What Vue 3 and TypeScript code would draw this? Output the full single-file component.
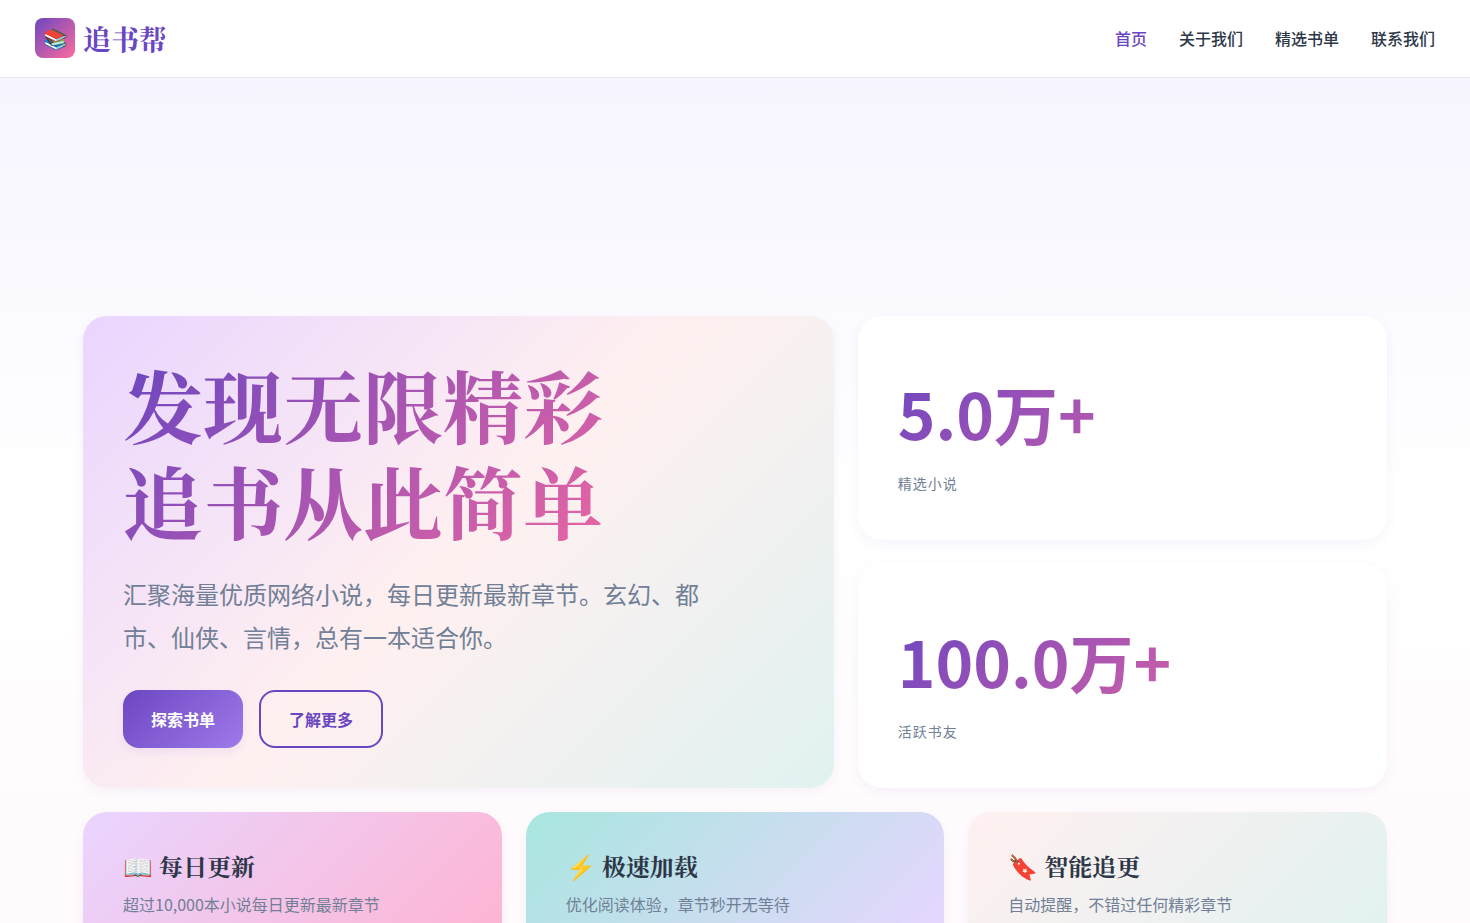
<script setup lang="ts">
interface NavItem { label: string; href: string; active?: boolean }
interface Stat { value: string; label: string }
interface Feature { icon: string; title: string; text: string; tone: string }

const navItems: NavItem[] = [
  { label: '首页', href: '#home', active: true },
  { label: '关于我们', href: '#about' },
  { label: '精选书单', href: '#books' },
  { label: '联系我们', href: '#contact' },
]

const stats: Stat[] = [
  { value: '5.0万+', label: '精选小说' },
  { value: '100.0万+', label: '活跃书友' },
]

const features: Feature[] = [
  { icon: '📖', title: '每日更新', text: '超过10,000本小说每日更新最新章节', tone: 'pink' },
  { icon: '⚡', title: '极速加载', text: '优化阅读体验，章节秒开无等待', tone: 'mint' },
  { icon: '🔖', title: '智能追更', text: '自动提醒，不错过任何精彩章节', tone: 'cream' },
]
</script>

<template>
  <div class="page">
    <header class="header">
      <div class="header-inner">
        <a class="logo" href="#home">
          <span class="logo-icon" aria-hidden="true">📚</span>
          <span class="logo-text">追书帮</span>
        </a>
        <nav class="nav" aria-label="主导航">
          <a
            v-for="item in navItems"
            :key="item.href"
            :href="item.href"
            class="nav-link"
            :class="{ active: item.active }"
          >{{ item.label }}</a>
        </nav>
      </div>
    </header>

    <main class="bento">
      <section class="card hero">
        <h1 class="hero-title">发现无限精彩<br>追书从此简单</h1>
        <p class="hero-text">汇聚海量优质网络小说，每日更新最新章节。玄幻、都市、仙侠、言情，总有一本适合你。</p>
        <div class="actions">
          <button type="button" class="btn primary">探索书单</button>
          <button type="button" class="btn outline">了解更多</button>
        </div>
      </section>

      <section v-for="stat in stats" :key="stat.label" class="card stat">
        <div class="stat-value">{{ stat.value }}</div>
        <div class="stat-label">{{ stat.label }}</div>
      </section>

      <section v-for="f in features" :key="f.title" class="card feature" :class="f.tone">
        <h3 class="feature-title">{{ f.icon }} {{ f.title }}</h3>
        <p class="feature-text">{{ f.text }}</p>
      </section>
    </main>
  </div>
</template>

<style>
body {
  margin: 0;
  overflow-x: hidden;
}
html {
  scrollbar-width: none;
}
</style>

<style scoped>
.page {
  --primary: #6b46c1;
  --ink: #2d3748;
  --muted: #718096;
  --serif: "Noto Serif SC", "Noto Serif CJK SC", "Noto Sans CJK SC", serif;
  --brand: linear-gradient(135deg, #6b46c1 0%, #ff6b9d 100%);
  min-height: 100vh;
  font-family: "Noto Sans CJK SC", sans-serif;
  font-size: 16px;
  line-height: 1.6;
  color: var(--ink);
  background: linear-gradient(180deg, #f5f3ff 0%, #ffffff 50%, #fff9fb 100%);
}
.page * {
  box-sizing: border-box;
}
.header {
  background: #ffffff;
  border-bottom: 1px solid #e2e8f0;
}
.header-inner {
  max-width: 1400px;
  margin: 0 auto;
  padding: 16px 0;
  display: flex;
  align-items: center;
  justify-content: space-between;
}
.logo {
  display: flex;
  align-items: center;
  gap: 8px;
  color: var(--primary);
  text-decoration: none;
}
.logo-icon {
  width: 40px;
  height: 40px;
  display: flex;
  align-items: center;
  justify-content: center;
  border-radius: 8px;
  background: var(--brand);
  font-size: 20px;
}
.logo-text {
  font-family: var(--serif);
  font-size: 28px;
  font-weight: 700;
}
.nav {
  display: flex;
  gap: 32px;
}
.nav-link {
  color: var(--ink);
  font-weight: 500;
  text-decoration: none;
}
.nav-link.active {
  color: var(--primary);
}
.bento {
  max-width: 1400px;
  margin: 0 auto;
  padding: 238px 48px 48px;
  box-sizing: border-box;
  display: grid;
  grid-template-columns: repeat(12, 1fr);
  gap: 24px;
}
.card {
  padding: 40px;
  border-radius: 24px;
  background: #ffffff;
  box-shadow: 0 4px 12px rgba(107, 70, 193, 0.06);
}
.hero {
  grid-column: span 7;
  grid-row: span 2;
  background: linear-gradient(135deg, #e9d5ff 0%, #fff0f0 50%, #e0f2f1 100%);
}
.hero-title {
  max-width: 600px;
  margin: 0 0 24px;
  font-family: var(--serif);
  font-size: 80px;
  font-weight: 700;
  line-height: 96px;
  color: transparent;
  background: var(--brand);
  background-clip: text;
}
.hero-text {
  max-width: 600px;
  margin: 0 0 32px;
  font-size: 24px;
  line-height: 43px;
  color: var(--muted);
}
.actions {
  display: flex;
  gap: 16px;
}
.btn {
  padding: 16px 28px;
  border: 0;
  border-radius: 16px;
  font: inherit;
  font-weight: 700;
  line-height: 22px;
  cursor: pointer;
}
.btn.primary {
  color: #ffffff;
  background: linear-gradient(135deg, #6b46c1 0%, #9f7aea 100%);
  box-shadow: 0 4px 8px rgba(107, 70, 193, 0.08);
}
.btn.outline {
  color: var(--primary);
  background: transparent;
  border: 2px solid var(--primary);
}
.stat {
  grid-column: span 5;
  display: flex;
  flex-direction: column;
  justify-content: center;
}
.stat-value {
  margin-bottom: 8px;
  font-size: 64px;
  font-weight: 700;
  color: transparent;
  background: var(--brand);
  background-clip: text;
}
.stat-label {
  font-size: 14px;
  letter-spacing: 1px;
  color: var(--muted);
}
.feature {
  grid-column: span 4;
}
.feature.pink {
  background: linear-gradient(135deg, #e9d5ff 0%, #ffb3d1 100%);
}
.feature.mint {
  background: linear-gradient(135deg, #a8e6df 0%, #e9d5ff 100%);
}
.feature.cream {
  background: linear-gradient(135deg, #fff0f0 0%, #e0f2f1 100%);
}
.feature-title {
  margin: 0 0 12px;
  font-family: var(--serif);
  font-size: 24px;
  font-weight: 700;
  line-height: 28px;
}
.feature-text {
  margin: 0;
  line-height: 24px;
  color: var(--muted);
}
</style>
